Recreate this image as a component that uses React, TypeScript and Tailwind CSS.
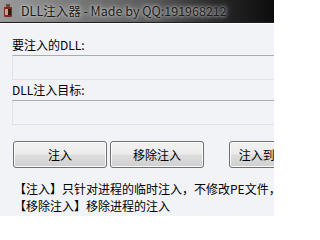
import React from "react";

const cjk = {
  fontFamily: '"Noto Sans CJK SC", "Liberation Sans", sans-serif',
};

const AppIcon = () => (
  <svg width="10" height="14" viewBox="0 0 10 14" className="shrink-0">
    <rect x="3" y="0" width="4" height="3" fill="#6b4a3a" />
    <rect x="1" y="3" width="8" height="10" rx="1" fill="#7a2a22" />
    <rect x="2" y="5" width="3" height="6" fill="#c9a08a" />
    <rect x="5" y="5" width="3" height="6" fill="#3a1510" />
  </svg>
);

const Button = ({ label, className }: { label: string; className?: string }) => (
  <div
    className={`${className} h-[27px] shrink-0 flex items-center justify-center rounded-[3px] border border-[#707070] bg-[linear-gradient(#f2f2f2_0%,#ebebeb_48%,#dddddd_52%,#cfcfcf_100%)] text-[12px] text-black shadow-[inset_0_0_0_1px_#fbfbfb]`}
  >
    {label}
  </div>
);

export default function App() {
  return (
    <div
      className="w-[274px] h-[216px] overflow-hidden bg-[#f2f3f7] text-black"
      style={cjk}
    >
      <div className="h-[23px] flex items-center gap-[8px] pl-[3px] bg-[linear-gradient(90deg,#9a9a9a_0%,#7a7a7a_25%,#5a5a5a_55%,#2a2a2a_78%,#0c0c0c_100%)] border-b border-[#1e1e1e]">
        <AppIcon />
        <span className="text-[12.5px] leading-none text-[#1c1c1c] whitespace-nowrap [text-shadow:0_0_6px_#d8d8d8,0_0_3px_#d0d0d0]">
          DLL注入器 - Made by QQ:191968212
        </span>
      </div>
      <div className="h-px bg-white" />
      <div className="w-[340px] pl-[12px]">
        <div className="mt-[13px] h-[16px] text-[12px] leading-[16px]">要注入的DLL:</div>
        <div className="mt-[2px] h-[25px] border border-[#dde3ea] border-t-[#abadb3]" />
        <div className="mt-[2px] h-[16px] text-[12px] leading-[16px]">DLL注入目标:</div>
        <div className="mt-[2px] h-[25px] border border-[#dde3ea] border-t-[#abadb3]" />
        <div className="mt-[16px] flex pl-[1px]">
          <Button label="注入" className="w-[94px]" />
          <Button label="移除注入" className="ml-[3px] w-[94px]" />
          <Button label="注入到PE文件" className="ml-[25px] w-[94px]" />
        </div>
        <div className="mt-[13px] pl-[2px] text-[12px] leading-[16px] whitespace-nowrap">
          【注入】只针对进程的临时注入，不修改PE文件，
        </div>
        <div className="mt-px pl-[2px] text-[12px] leading-[16px] whitespace-nowrap">
          【移除注入】移除进程的注入
        </div>
      </div>
    </div>
  );
}
